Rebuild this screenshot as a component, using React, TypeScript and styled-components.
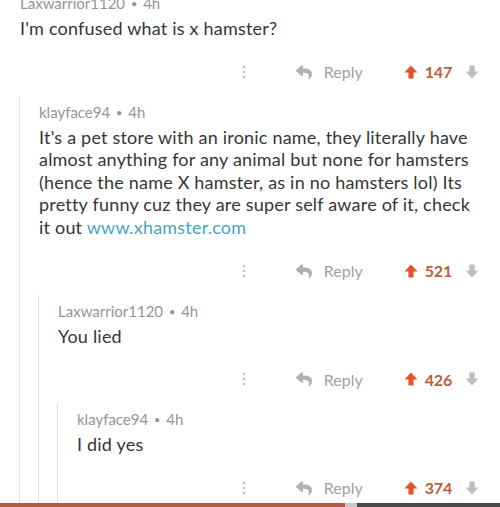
import React from "react";
import styled, { createGlobalStyle } from "styled-components";

const GlobalStyle = createGlobalStyle`
  html, body {
    margin: 0;
    padding: 0;
    background: #ffffff;
  }
  body {
    font-family: Lato, "Liberation Sans", sans-serif;
    overflow: hidden;
  }
`;

const Page = styled.div`
  margin-top: -13px;
  padding-left: 20px;
  padding-right: 21px;
  height: 520px;
  overflow: hidden;
`;

const CommentBlock = styled.div`
  padding-top: 6px;
`;

const Meta = styled.div`
  font-size: 15px;
  line-height: 20px;
  color: #959595;
`;

const Sep = styled.span`
  font-size: 11px;
  margin: 0 2px;
  vertical-align: 1px;
`;

const Body = styled.div`
  margin-top: 3px;
  font-size: 18px;
  line-height: 22.6px;
  letter-spacing: 0.2px;
  color: #363636;
`;

const Link = styled.span`
  color: #4aa3c6;
`;

const Actions = styled.div`
  margin-top: 17px;
  height: 30px;
  display: flex;
  align-items: center;
  justify-content: flex-end;
`;

const Dots = styled.div`
  display: flex;
  align-items: center;
  margin-right: 50px;
`;

const ReplyButton = styled.div`
  display: flex;
  align-items: center;
  gap: 12px;
  font-size: 16px;
  color: #a2a2a2;
  margin-right: 41px;
`;

const Votes = styled.div`
  display: flex;
  align-items: center;
`;

const Score = styled.span`
  font-size: 16px;
  font-weight: 700;
  color: #bd5d3c;
  margin: 0 13px 0 7px;
  letter-spacing: -0.2px;
`;

const Children = styled.div`
  margin-top: 9px;
  margin-left: -1px;
  border-left: 1px solid #e2e2e2;
  padding-left: 19px;
`;

const Tail = styled.div`
  height: 20px;
`;

const BottomBar = styled.div`
  position: fixed;
  left: 0;
  right: 0;
  bottom: 0;
  height: 4px;
  display: flex;
`;

const BarRed = styled.div`
  width: 345px;
  background: #b9573f;
`;

const BarLight = styled.div`
  width: 12px;
  background: #c9c9c9;
`;

const BarDark = styled.div`
  flex: 1;
  background: #4a4a4a;
`;

type CommentData = {
  author: string;
  age: string;
  body: React.ReactNode;
  score: number;
  children?: CommentData[];
};

const buildThread = (): CommentData => ({
  author: "Laxwarrior1120",
  age: "4h",
  body: "I'm confused what is x hamster?",
  score: 147,
  children: [
    {
      author: "klayface94",
      age: "4h",
      body: (
        <>
          It's a pet store with an ironic name, they literally have almost
          anything for any animal but none for hamsters (hence the name X
          hamster, as in no hamsters lol) Its pretty funny cuz they are super
          self aware of it, check it out <Link>www.xhamster.com</Link>
        </>
      ),
      score: 521,
      children: [
        {
          author: "Laxwarrior1120",
          age: "4h",
          body: "You lied",
          score: 426,
          children: [
            {
              author: "klayface94",
              age: "4h",
              body: "I did yes",
              score: 374,
            },
          ],
        },
      ],
    },
  ],
});

const DotsIcon = () => (
  <svg width="4" height="14" viewBox="0 0 4 14">
    <circle cx="2" cy="2" r="1.3" fill="#c4c4c4" />
    <circle cx="2" cy="7" r="1.3" fill="#c4c4c4" />
    <circle cx="2" cy="12" r="1.3" fill="#c4c4c4" />
  </svg>
);

const ReplyIcon = () => (
  <svg width="16" height="14" viewBox="0 0 512 440">
    <path
      fill="#b0b0b0"
      d="M8.309 159.836L184.313 7.851C199.719 -5.454 224 5.347 224 26.015v80.053c160.629 1.839 288 34.032 288 186.258 0 61.441-39.581 122.309-83.333 154.132-13.653 9.931-33.111-2.533-28.077-18.631 45.344-145.012-21.507-183.51-176.59-185.742V330c0 20.7-24.3 31.453-39.687 18.164l-176.004-152c-11.071-9.562-11.086-26.753 0-36.328z"
    />
  </svg>
);

const ArrowIcon: React.FC<{ color: string; down?: boolean }> = ({ color, down }) => (
  <svg
    width="14"
    height="14"
    viewBox="0 0 14 14"
    style={down ? { transform: "rotate(180deg)" } : undefined}
  >
    <polygon points="7,0.5 13.5,7.5 9.6,7.5 9.6,13.5 4.4,13.5 4.4,7.5 0.5,7.5" fill={color} />
  </svg>
);

const Comment: React.FC<{ data: CommentData }> = ({ data }) => {
  const kids = data.children ?? [];
  return (
    <CommentBlock>
      <Meta>
        {data.author} <Sep>•</Sep> {data.age}
      </Meta>
      <Body>{data.body}</Body>
      <Actions>
        <Dots>
          <DotsIcon />
        </Dots>
        <ReplyButton>
          <ReplyIcon />
          <span>Reply</span>
        </ReplyButton>
        <Votes>
          <ArrowIcon color="#e4532b" />
          <Score>{data.score}</Score>
          <ArrowIcon color="#bdbdbd" down />
        </Votes>
      </Actions>
      {kids.map((child, i) => (
        <Children key={i}>
          <Comment data={child} />
        </Children>
      ))}
      {kids.length === 0 && <Tail />}
    </CommentBlock>
  );
};

const App: React.FC = () => {
  const thread = buildThread();
  return (
    <>
      <GlobalStyle />
      <Page>
        <Comment data={thread} />
      </Page>
      <BottomBar>
        <BarRed />
        <BarLight />
        <BarDark />
      </BottomBar>
    </>
  );
};

export default App;
